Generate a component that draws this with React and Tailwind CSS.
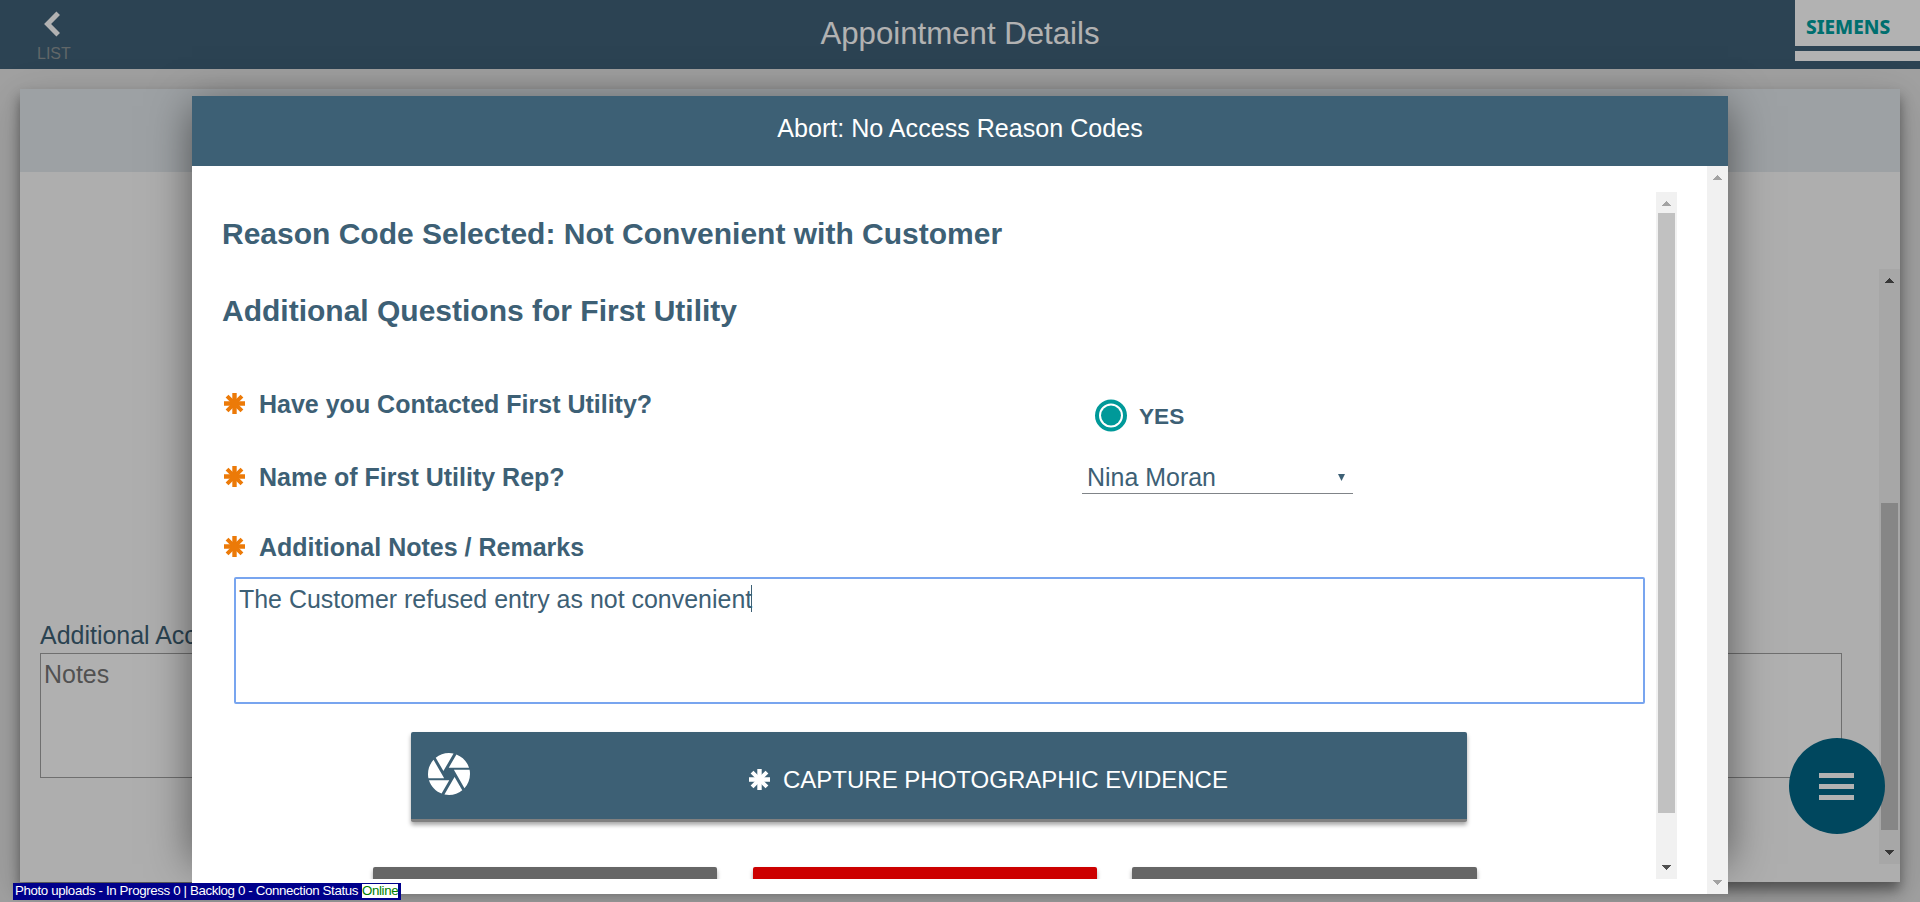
import React from "react";

const Asterisk = ({ className }) => (
  <svg viewBox="0 0 22 22" className={className} stroke="currentColor" fill="none">
    <path d="M11 0v22M0 11h22" strokeWidth="4.600" />
    <path d="M3.200 3.200l15.600 15.600M18.800 3.200L3.200 18.800" strokeWidth="4.200" />
  </svg>
);

const Shutter = ({ className }) => (
  <svg viewBox="2 2 20 20" className={className} fill="currentColor">
    <path d="M9.4 10.5l4.77-8.26C13.47 2.09 12.75 2 12 2c-2.4 0-4.6.85-6.32 2.25l3.66 6.35.06-.1zM21.54 9c-.92-2.92-3.15-5.26-6-6.34L11.88 9h9.66zm.26 1h-7.49l.29.5 4.76 8.25C21 16.97 22 14.61 22 12c0-.69-.07-1.35-.2-2zM8.54 12l-3.9-6.75C3.01 7.03 2 9.39 2 12c0 .69.07 1.35.2 2h7.49l-1.15-2zm-6.08 3c.92 2.92 3.15 5.26 6 6.34L12.12 15H2.46zm11.27 0l-3.9 6.76c.7.15 1.42.24 2.17.24 2.4 0 4.6-.85 6.32-2.25l-3.66-6.35-.93 1.6z" />
  </svg>
);

const Arrow = ({ down, className }) => (
  <span className={`flex h-[21px] w-[21px] shrink-0 justify-center ${down ? "pt-[7px]" : "pt-[9px]"}`}>
    <svg viewBox="0 0 9 5" className={`h-[5px] w-[9px] ${className}`} fill="currentColor" shapeRendering="crispEdges">
      <path d={down ? "M0 0h9L4.5 5z" : "M0 5h9L4.5 0z"} />
    </svg>
  </span>
);

const Label = ({ children, className }) => (
  <div className={`flex h-[28px] items-center text-[25px] font-bold ${className}`}>
    <Asterisk className="mr-[14px] mt-[-1px] h-[21px] w-[21px] text-[#ec7a08]" />
    {children}
  </div>
);

export default function App() {
  return (
    <div className="relative h-[902px] w-[1920px] overflow-hidden bg-[#e6e6e6] font-['Liberation_Sans',Arial,sans-serif] text-[24.96px] leading-[28px] text-[#3d6075]">
      <header className="flex h-[69px] items-start justify-between bg-[#3f6077] text-white">
        <div className="flex w-[454px] flex-col pl-[37px] pt-[11px]">
          <svg viewBox="0 0 17 26" className="ml-[7px] h-[26px] w-[17px]" fill="none" stroke="#fff" strokeWidth="5">
            <path d="M14.2 2.2L3.6 13l10.6 10.8" />
          </svg>
          <span className="mt-[7px] text-[16px] leading-[20px] text-[#8c9496]">LIST</span>
        </div>
        <h1 className="pt-[16px] text-[31.2px] leading-[36px]">Appointment Details</h1>
        <div className="flex w-[454px] justify-end">
          <div className="flex h-[61px] w-[125px] flex-col bg-white">
            <div className="h-[46px] pl-[11px] pt-[16px] font-['Noto_Sans','Open_Sans',sans-serif] text-[19px] font-extrabold leading-[22px] text-[#00a0a0]">SIEMENS</div>
            <div className="h-[5px] bg-[#3f6077]" />
          </div>
        </div>
      </header>

      <main className="mx-[20px] mt-[20px] flex h-[793px] flex-col bg-[#f9f9f9] shadow-[0_8px_12px_rgba(0,0,0,0.42),0_12px_40px_rgba(0,0,0,0.18)]">
        <div className="h-[83px] bg-[#e1e7eb]" />
        <div className="flex flex-1">
          <div className="flex-1 pl-[20px] pt-[449px]">
            <div className="h-[32px]">Additional Access Notes</div>
            <div className="h-[125px] w-[1802px] border border-[#a0a0a0] bg-[#fdfdfd] px-[3px] py-[6px] text-[#757575]">Notes</div>
          </div>
          <div className="mt-[97px] flex h-[595px] w-[21px] flex-col bg-[#f0f0f0]">
            <Arrow className="text-[#505050]" />
            <div className="mx-[2px] mt-[213px] h-[327px] bg-[#c1c1c1]" />
            <div className="flex-1" />
            <Arrow down className="text-[#505050]" />
          </div>
        </div>
      </main>

      <div className="absolute left-[1788px] top-[737px] flex h-[98px] w-[98px] flex-col items-center justify-center gap-[6px] rounded-full border border-transparent bg-[#006687] bg-clip-padding pr-px">
        <div className="h-[5px] w-[35px] bg-white" />
        <div className="h-[5px] w-[35px] bg-white" />
        <div className="h-[5px] w-[35px] bg-white" />
      </div>

      <div className="absolute inset-0 bg-black/30" />
      <div className="absolute left-[192px] top-[106px] h-[758px] w-[1536px] shadow-[0_0_40px_rgba(0,0,0,0.5)]" />

      <section className="absolute left-[192px] top-[96px] flex h-[798px] w-[1536px] flex-col bg-white">
        <h2 className="h-[70px] shrink-0 bg-[#3d6075] pt-[18px] text-center text-[25.1px] text-white">Abort: No Access Reason Codes</h2>
        <div className="flex flex-1">
          <div className="mt-[26px] flex h-[687px] w-[1485px] overflow-hidden">
            <div className="flex-1 pl-[30px]">
              <h3 className="mt-[24px] text-[30px] font-bold leading-[36px]">Reason Code Selected: Not Convenient with Customer</h3>
              <h3 className="mt-[41px] text-[30px] font-bold leading-[36px]">Additional Questions for First Utility</h3>
              <div className="mt-[61px] flex">
                <Label className="w-[860px] pl-[2px]">Have you Contacted First Utility?</Label>
                <div className="flex h-[52px] items-center pl-[13px] text-[22.6px] font-bold">
                  <svg viewBox="0 0 32 33" className="mr-[12px] mt-[-2px] h-[33px] w-[32px]">
                    <circle cx="16" cy="16.5" r="14" fill="#fff" stroke="#009999" strokeWidth="4" />
                    <circle cx="16" cy="16.5" r="10" fill="#009999" />
                  </svg>
                  <span className="mt-px">YES</span>
                </div>
              </div>
              <div className="mt-[16px] flex">
                <Label className="mt-[5px] w-[860px] pl-[2px]">Name of First Utility Rep?</Label>
                <div className="flex h-[36px] w-[271px] items-center justify-between border-b border-[#808488] pl-[5px] pr-[8px] pt-[3px]">
                  Nina Moran
                  <svg viewBox="0 0 7 7" className="mt-px h-[7px] w-[7px]" fill="currentColor"><path d="M0 0h7L3.500 7z" /></svg>
                </div>
              </div>
              <Label className="mt-[39px] pl-[2px]">Additional Notes / Remarks</Label>
              <div className="ml-[12px] mt-[16px] flex h-[127px] w-[1411px] items-start rounded-[2px] border-2 border-[#78a5ef] px-[3px] pt-[6px]">
                The Customer refused entry as not convenient
                <span className="ml-[-1px] h-[27px] w-px bg-[#3d6075]" />
              </div>
              <button className="ml-[189px] mt-[28px] flex h-[90px] w-[1056px] items-start rounded-[2px] border-b-[3px] border-[#808080] bg-[#3d6075] pl-[17px] pt-[21px] text-white shadow-[0_3px_4px_rgba(0,0,0,0.35)]">
                <Shutter className="h-[42px] w-[42px]" />
                <span className="ml-[279px] mt-[13px] flex items-center text-[24px]">
                  <Asterisk className="mr-[13px] mt-[-2px] h-[21px] w-[21px]" />
                  CAPTURE PHOTOGRAPHIC EVIDENCE
                </span>
              </button>
              <div className="ml-[151px] mt-[45px] flex">
                <div className="h-[60px] w-[344px] rounded-[2px] bg-[#666] shadow-[0_3px_4px_rgba(0,0,0,0.35)]" />
                <div className="ml-[36px] h-[60px] w-[344px] rounded-[2px] bg-[#c00] shadow-[0_3px_4px_rgba(0,0,0,0.35)]" />
                <div className="ml-[35px] h-[60px] w-[345px] rounded-[2px] bg-[#666] shadow-[0_3px_4px_rgba(0,0,0,0.35)]" />
              </div>
            </div>
            <div className="flex w-[21px] flex-col bg-[#f1f1f1]">
              <Arrow className="text-[#a3a3a3]" />
              <div className="mx-[2px] h-[600px] bg-[#c1c1c1]" />
              <div className="flex-1" />
              <Arrow down className="text-[#505050]" />
            </div>
          </div>
          <div className="ml-auto flex w-[21px] flex-col justify-between bg-[#f1f1f1]">
            <Arrow className="text-[#a3a3a3]" />
            <Arrow down className="text-[#a3a3a3]" />
          </div>
        </div>
      </section>

      <div className="absolute left-[13px] top-[883px] flex h-[17px] w-[388px] items-start whitespace-nowrap bg-[#00008b] pl-[2px] pt-px text-[13.3px] leading-[14px] tracking-[-0.37px] text-white">
        <span className="w-[347px]">Photo uploads - In Progress 0 | Backlog 0 - Connection Status</span>
        <span className="h-[14px] w-[36px] bg-white text-[#008000]">Online</span>
      </div>
    </div>
  );
}
